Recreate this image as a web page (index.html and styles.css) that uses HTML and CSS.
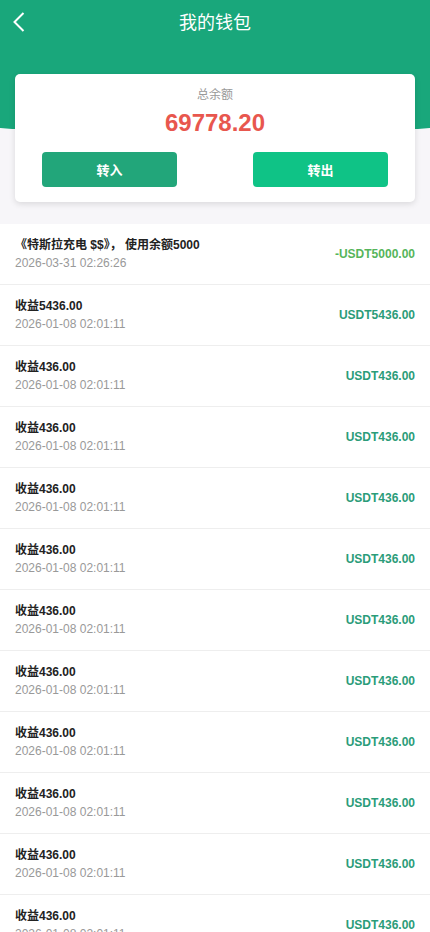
FILE: index.html
```html
<!DOCTYPE html>
<html lang="zh">
<head>
<meta charset="utf-8">
<meta name="viewport" content="width=device-width, initial-scale=1">
<title>我的钱包</title>
<link rel="stylesheet" href="styles.css">
</head>
<body>
<div class="page">
  <header class="hero">
    <div class="nav">
      <span class="back">
        <svg width="14" height="22" viewBox="0 0 14 22"><path d="M11.5 2 L2.5 11 L11.5 20" fill="none" stroke="#fff" stroke-width="2"/></svg>
      </span>
      <h1 class="title">我的钱包</h1>
    </div>
    <section class="card">
      <div class="label">总余额</div>
      <div class="balance">69778.20</div>
      <div class="actions">
        <button class="btn btn-in">转入</button>
        <button class="btn btn-out">转出</button>
      </div>
    </section>
  </header>
  <ul class="list">
    <li class="row">
      <div class="info"><div class="name">《特斯拉充电 $$》， 使用余额5000</div><div class="date">2026-03-31 02:26:26</div></div>
      <div class="amt neg">-USDT5000.00</div>
    </li>
    <li class="row">
      <div class="info"><div class="name">收益5436.00</div><div class="date">2026-01-08 02:01:11</div></div>
      <div class="amt">USDT5436.00</div>
    </li>
    <li class="row"><div class="info"><div class="name">收益436.00</div><div class="date">2026-01-08 02:01:11</div></div><div class="amt">USDT436.00</div></li>
    <li class="row"><div class="info"><div class="name">收益436.00</div><div class="date">2026-01-08 02:01:11</div></div><div class="amt">USDT436.00</div></li>
    <li class="row"><div class="info"><div class="name">收益436.00</div><div class="date">2026-01-08 02:01:11</div></div><div class="amt">USDT436.00</div></li>
    <li class="row"><div class="info"><div class="name">收益436.00</div><div class="date">2026-01-08 02:01:11</div></div><div class="amt">USDT436.00</div></li>
    <li class="row"><div class="info"><div class="name">收益436.00</div><div class="date">2026-01-08 02:01:11</div></div><div class="amt">USDT436.00</div></li>
    <li class="row"><div class="info"><div class="name">收益436.00</div><div class="date">2026-01-08 02:01:11</div></div><div class="amt">USDT436.00</div></li>
    <li class="row"><div class="info"><div class="name">收益436.00</div><div class="date">2026-01-08 02:01:11</div></div><div class="amt">USDT436.00</div></li>
    <li class="row"><div class="info"><div class="name">收益436.00</div><div class="date">2026-01-08 02:01:11</div></div><div class="amt">USDT436.00</div></li>
    <li class="row"><div class="info"><div class="name">收益436.00</div><div class="date">2026-01-08 02:01:11</div></div><div class="amt">USDT436.00</div></li>
    <li class="row"><div class="info"><div class="name">收益436.00</div><div class="date">2026-01-08 02:01:11</div></div><div class="amt">USDT436.00</div></li>
  </ul>
</div>
</body>
</html>
```
FILE: styles.css
```css
* { box-sizing: border-box; }
html, body { margin: 0; padding: 0; }
body {
  font-family: "Liberation Sans", "Noto Sans CJK SC", sans-serif;
  background: #f7f6f9;
  color: #222;
}
.page { width: 430px; }
.hero {
  background:
    radial-gradient(ellipse 700px 135px at 50% 0, #19a77b 99.5%, rgba(25,167,123,0) 100%) top center / 100% 135px no-repeat,
    #f7f6f9;
  padding: 0 15px 22px;
}
.nav {
  height: 48px;
  display: flex;
  align-items: center;
  justify-content: center;
  position: relative;
}
.back {
  position: absolute;
  left: -3px;
  top: 11px;
  width: 14px;
  height: 22px;
  display: flex;
}
.title {
  margin: 0;
  font-size: 18px;
  font-weight: normal;
  color: #fff;
  line-height: 24px;
  margin-top: -2px;
}
.card {
  margin-top: 26px;
  background: #fff;
  border-radius: 5px;
  box-shadow: 0 2px 6px rgba(0,0,0,0.12);
  padding: 12px 27px 15px;
  display: flex;
  flex-direction: column;
  align-items: center;
}
.label {
  font-size: 12px;
  color: #999;
  line-height: 18px;
}
.balance {
  font-size: 24px;
  font-weight: bold;
  color: #e8574e;
  line-height: 34px;
  margin-top: 2px;
}
.actions {
  width: 100%;
  display: flex;
  justify-content: space-between;
  margin-top: 12px;
}
.btn {
  width: 135px;
  height: 35px;
  border: none;
  border-radius: 4px;
  color: #fff;
  font-family: inherit;
  font-size: 13px;
  font-weight: bold;
  padding: 0;
}
.btn-in { background: #22a67a; }
.btn-out { background: #0fc386; }
.list {
  list-style: none;
  margin: 0;
  padding: 0;
  background: #fff;
}
.row {
  display: flex;
  align-items: center;
  justify-content: space-between;
  padding: 12px 15px;
  border-bottom: 1px solid #eeeeee;
}
.name {
  font-size: 12px;
  font-weight: bold;
  color: #222;
  line-height: 18px;
}
.date {
  font-size: 12px;
  color: #999;
  line-height: 18px;
}
.amt {
  font-size: 12px;
  font-weight: bold;
  color: #2b9c79;
}
.amt.neg { color: #56b55b; }
```
